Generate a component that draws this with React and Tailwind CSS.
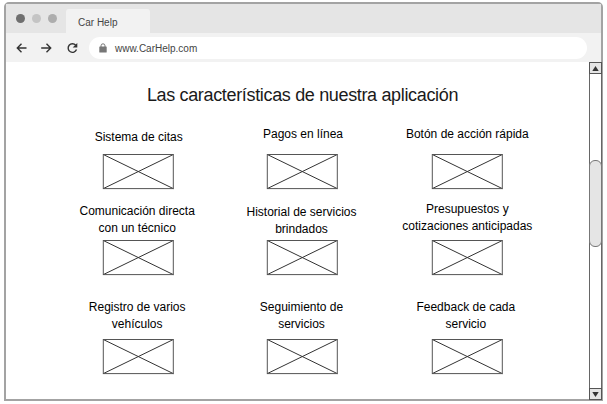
const rows = [
  {
    rowClass: "h-[70px]",
    cells: [
      { lines: ["Sistema de citas"], shift: "pt-[9px] pl-px" },
      { lines: ["Pagos en línea"], shift: "pt-[6px] pl-px" },
      { lines: ["Botón de acción rápida"], shift: "pt-[6px] pl-px" },
    ],
  },
  {
    rowClass: "h-[75px] mt-[11px]",
    cells: [
      { lines: ["Comunicación directa", "con un técnico"], shift: "pt-[2px] pr-[2px]" },
      { lines: ["Historial de servicios", "brindados"], shift: "pt-[3px] pr-[2px]" },
      { lines: ["Presupuestos y", "cotizaciones anticipadas"], shift: "pl-px" },
    ],
  },
  {
    rowClass: "h-[76px] mt-[23px]",
    cells: [
      { lines: ["Registro de varios", "vehículos"], shift: "pr-[2px]" },
      { lines: ["Seguimiento de", "servicios"], shift: "pr-[2px]" },
      { lines: ["Feedback de cada", "servicio"], shift: "pr-[2px]" },
    ],
  },
];

function Placeholder() {
  return (
    <svg className="block h-[36px] w-[72px]" viewBox="0 0 72 36" fill="none">
      <path d="M1.3 0.5 L71.3 34.6 M71.3 0.5 L1.3 34.6" stroke="#333" strokeWidth="1" />
      <rect x="1.3" y="0.5" width="70" height="34.1" stroke="#555" strokeWidth="1" />
    </svg>
  );
}

function Feature({ lines, shift }) {
  return (
    <div className="flex flex-col items-center justify-between">
      <div className={`text-center text-[12px] leading-[17px] whitespace-nowrap text-black ${shift}`}>
        {lines.map((line) => (
          <div key={line}>{line}</div>
        ))}
      </div>
      <Placeholder />
    </div>
  );
}

function TitleBar() {
  return (
    <div className="flex h-[29px] shrink-0 items-end bg-[#e5e5e5]">
      <div className="flex h-full w-[60px] items-center gap-[7px] pl-[10px]">
        <span className="size-[9px] rounded-full bg-[#6f6f6f]" />
        <span className="size-[9px] rounded-full bg-[#c4c4c4]" />
        <span className="size-[9px] rounded-full bg-[#adadad]" />
      </div>
      <div className="flex h-[24px] w-[84px] items-center rounded-t-[3px] bg-[#f2f2f2] pt-[2px] pl-[12px] text-[10px] text-[#444]">
        Car Help
      </div>
    </div>
  );
}

function Toolbar() {
  return (
    <div className="flex h-[29px] shrink-0 items-center bg-[#f2f2f2] pr-[14px] pl-[10px]">
      <svg className="h-[14px] w-[73px] shrink-0" viewBox="0 0 73 14" fill="none" stroke="#333" strokeWidth="1.4">
        <path d="M10.5 7H1.5M5.5 2.8L1.3 7L5.5 11.2" />
        <path d="M25.2 7H34.5M30.5 2.8L34.7 7L30.5 11.2" />
        <path d="M59.7 4.2A4.3 4.3 0 1 0 60.5 8.5" />
        <path d="M61.3 2V6.6H56.7Z" fill="#333" stroke="none" />
      </svg>
      <div className="flex h-[22px] flex-1 items-center rounded-full bg-white pl-[10px] text-[10px] text-[#444]">
        <svg className="mr-[8px] h-[10px] w-[8px]" viewBox="0 0 8 10">
          <path d="M2 4V2.8a2 2 0 0 1 4 0V4" fill="none" stroke="#777" strokeWidth="1" />
          <rect x="0.3" y="3.5" width="7.4" height="6" rx="0.6" fill="#777" />
        </svg>
        <span className="pt-px">www.CarHelp.com</span>
      </div>
    </div>
  );
}

function ScrollButton({ down = false }) {
  return (
    <div className="flex h-[12px] w-[13px] shrink-0 items-center justify-center border border-[#555] bg-[#e5e5e5]">
      <svg className="h-[5px] w-[7px]" viewBox="0 0 7 5">
        <path d={down ? "M0.3 0H6.7L3.5 5Z" : "M0.3 5H6.7L3.5 0Z"} fill="#333" />
      </svg>
    </div>
  );
}

function Scrollbar() {
  return (
    <div className="-mr-[1px] -mb-px flex w-[13px] shrink-0 flex-col bg-white">
      <ScrollButton />
      <div className="flex-1 border-x border-[#666] pt-[86px]">
        <div className="-mx-px h-[87px] rounded-[6px] border border-[#777] bg-[#e5e5e5]" />
      </div>
      <ScrollButton down />
    </div>
  );
}

export default function App() {
  return (
    <div className="h-[404px] w-[607px] overflow-hidden bg-white pt-[2px] pl-[4px] font-['Liberation_Sans',Arial,sans-serif]">
      <div className="flex h-[399px] w-[599px] flex-col rounded-t-[5px] border-2 border-[#a3a3a3] bg-white">
        <TitleBar />
        <Toolbar />
        <div className="flex min-h-0 flex-1">
          <main className="min-w-0 flex-1 pl-[50px]">
            <h1 className="w-[493px] pt-[22px] text-center text-[18px] leading-[22px] tracking-[-0.34px] whitespace-nowrap text-[#1a1a1a]">
              Las características de nuestra aplicación
            </h1>
            <div className="mt-[14px]">
              {rows.map((row, index) => (
                <div key={index} className={`grid w-[493px] grid-cols-3 ${row.rowClass}`}>
                  {row.cells.map((cell) => (
                    <Feature key={cell.lines[0]} {...cell} />
                  ))}
                </div>
              ))}
            </div>
          </main>
          <Scrollbar />
        </div>
      </div>
    </div>
  );
}
